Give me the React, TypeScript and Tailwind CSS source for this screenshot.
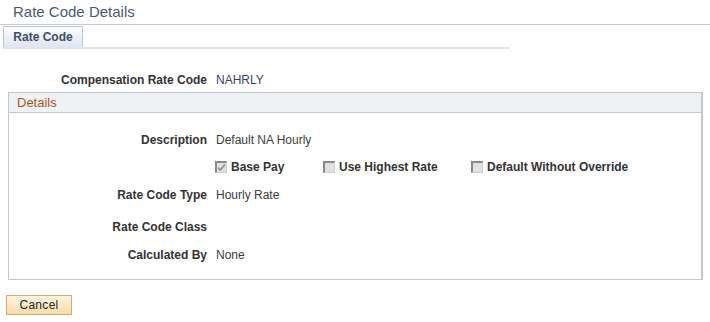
import React from 'react';

const font = { fontFamily: '"Liberation Sans", Arial, sans-serif' };

function Check({ checked }: { checked?: boolean }) {
  return (
    <span className="flex h-[12px] w-[12px] shrink-0 items-center justify-center border-t-2 border-l-2 border-r border-b border-t-[#8a8a8a] border-l-[#8a8a8a] border-r-[#d0d0d0] border-b-[#d0d0d0] bg-[#e2e0dc]">
      {checked && (
        <svg width="9" height="9" viewBox="0 0 9 9">
          <path d="M1 4.5 L3.3 7 L8 1.5" fill="none" stroke="#8c8c8c" strokeWidth="1.6" />
        </svg>
      )}
    </span>
  );
}

function Row({ label, value, className = '' }: { label: string; value?: string; className?: string }) {
  return (
    <div className={`flex h-[20px] items-center ${className}`}>
      <div className="w-[198px] text-right font-bold text-[#333]">{label}</div>
      <div className="ml-[9px] text-[#3c3c3c]">{value}</div>
    </div>
  );
}

export default function App() {
  return (
    <div className="h-[322px] w-[710px] bg-white text-[12px]" style={font}>
      <div className="flex h-[25px] items-center border-b border-[#c8cacc] pl-[13px] text-[15px] text-[#4b5a73]">
        Rate Code Details
      </div>

      <div className="ml-[3px] mt-[1px] w-[507px]">
        <div className="flex h-[21px] w-[80px] items-center justify-center border border-b-0 border-[#bcc6d6] bg-gradient-to-b from-[#fbfcfe] to-[#dfe6f1] font-bold text-[#3e4d6a]">
          Rate Code
        </div>
        <div className="h-[2px] bg-[#dce5f4]" />
      </div>

      <div className="mt-[21px] flex h-[20px] items-center">
        <div className="w-[207px] text-right font-bold text-[#333]">Compensation Rate Code</div>
        <div className="ml-[9px] text-[#3b4160]">NAHRLY</div>
      </div>

      <div className="ml-[8px] mt-[2px] h-[188px] w-[695px] border border-[#c4c8cc] border-r-2">
        <div className="flex h-[20px] items-center border-b border-[#c4c8cc] bg-[#eef2f4] pl-[8px] text-[13px] text-[#b5521c]">
          Details
        </div>

        <Row label="Description" value="Default NA Hourly" className="mt-[17px]" />

        <div className="mt-[7px] flex h-[20px] items-center pl-[206px] font-bold text-[#333]">
          <div className="flex w-[108px] items-center gap-[4px]">
            <Check checked />
            <span>Base Pay</span>
          </div>
          <div className="flex w-[148px] items-center gap-[4px]">
            <Check />
            <span>Use Highest Rate</span>
          </div>
          <div className="flex items-center gap-[4px]">
            <Check />
            <span>Default Without Override</span>
          </div>
        </div>

        <Row label="Rate Code Type" value="Hourly Rate" className="mt-[8px]" />
        <Row label="Rate Code Class" className="mt-[12px]" />
        <Row label="Calculated By" value="None" className="mt-[8px]" />
      </div>

      <button className="ml-[6px] mt-[15px] flex h-[20px] w-[66px] items-center justify-center border border-[#dfa66c] bg-gradient-to-b from-[#fdf4e3] to-[#f8dcac] tracking-[0.3px] text-[#222]">
        Cancel
      </button>
    </div>
  );
}
